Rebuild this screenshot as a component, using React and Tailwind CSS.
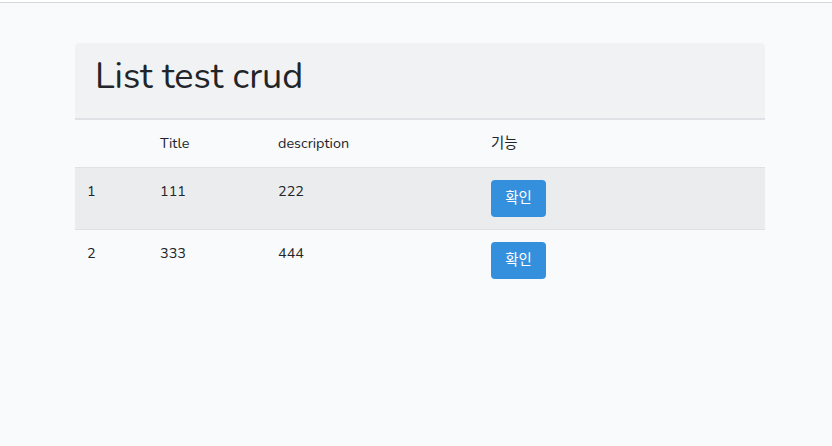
import React from 'react';

const rows = [
  { id: 1, title: '111', description: '222' },
  { id: 2, title: '333', description: '444' },
];

const font = { fontFamily: 'Nunito, Lato, "Noto Sans CJK KR", sans-serif' };

export default function App() {
  return (
    <div className="min-h-[446px] bg-[#f8fafc] text-[14.4px] leading-[1.6] text-[#212529]" style={font}>
      <div className="h-[3px] bg-white border-b border-[#d6d8db]" />
      <div className="pt-[40px] pl-[75px] pr-[67px]">
        <div className="rounded-t-[4px] overflow-hidden">
          <div className="bg-[#f1f2f4] px-5 pt-3 pb-[20px] border-b-2 border-[#dee2e6]">
            <h1 className="text-[36px] leading-[1.2] font-normal">List test crud</h1>
          </div>
          <table className="w-full border-collapse text-left table-fixed">
            <thead>
              <tr>
                <th className="w-[73px] p-3 font-normal"></th>
                <th className="w-[118px] p-3 font-normal">Title</th>
                <th className="w-[213px] p-3 font-normal">description</th>
                <th className="p-3 font-normal">기능</th>
              </tr>
            </thead>
            <tbody>
              {rows.map((row, i) => (
                <tr key={row.id} className={`border-t border-[#dee2e6] ${i % 2 === 0 ? 'bg-[#ebecee]' : ''}`}>
                  <td className="p-3 align-top">{row.id}</td>
                  <td className="p-3 align-top">{row.title}</td>
                  <td className="p-3 align-top">{row.description}</td>
                  <td className="p-3 align-top">
                    <button className="h-[37px] w-[55px] rounded-[4px] bg-[#3490dc] text-white text-[14.4px]">
                      확인
                    </button>
                  </td>
                </tr>
              ))}
            </tbody>
          </table>
        </div>
      </div>
    </div>
  );
}
